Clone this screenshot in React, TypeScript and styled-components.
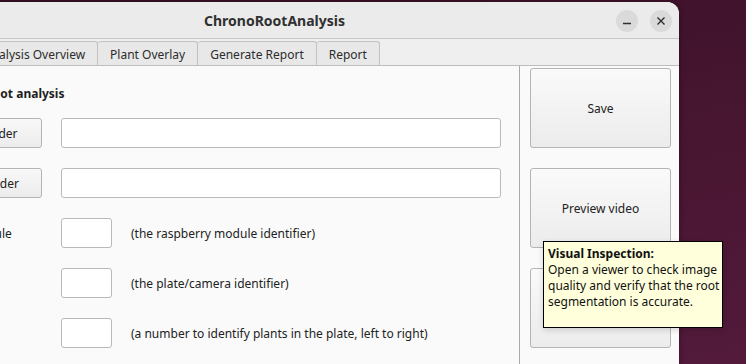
import React from "react";
import styled, { createGlobalStyle } from "styled-components";

const Global = createGlobalStyle`
  html, body { margin: 0; padding: 0; }
  body { width: 746px; height: 364px; overflow: hidden; font-family: "Noto Sans", "DejaVu Sans", sans-serif; }
`;

const Desktop = styled.div`
  position: relative;
  width: 746px;
  height: 364px;
  overflow: hidden;
  padding-top: 2px;
  box-sizing: border-box;
  background: linear-gradient(170deg, #3a1028 0%, #46152f 45%, #531a3b 100%);
`;

const Window = styled.div`
  margin-left: -130px;
  width: 809px;
  height: 380px;
  border-radius: 12px 12px 0 0;
  overflow: hidden;
  background: #fafafa;
  display: flex;
  flex-direction: column;
  box-shadow: 0 0 6px rgba(0, 0, 0, 0.35);
`;

const TitleBar = styled.div`
  height: 36px;
  flex: none;
  background: #ebebeb;
  border-bottom: 1px solid #c6c6c6;
  display: grid;
  grid-template-columns: 1fr auto 1fr;
  align-items: center;
`;

const Title = styled.div`
  grid-column: 2;
  font-weight: 700;
  font-size: 14px;
  color: #303030;
  padding-top: 1px;
`;

const Controls = styled.div`
  grid-column: 3;
  justify-self: end;
  display: flex;
  gap: 12px;
  padding-right: 7px;
  padding-top: 1px;
`;

const CircleButton = styled.div`
  width: 22px;
  height: 22px;
  border-radius: 50%;
  background: #dadada;
  display: flex;
  align-items: center;
  justify-content: center;
`;

const TabBar = styled.div`
  height: 26px;
  flex: none;
  background: #efefef;
  border-bottom: 1px solid #bdbdbd;
  display: flex;
  align-items: flex-end;
  padding-left: 101px;
`;

const Tab = styled.div<{ $first?: boolean }>`
  height: 24px;
  box-sizing: border-box;
  padding: 1px 12px 0;
  background: #e8e8e8;
  border: 1px solid #c2c2c2;
  border-bottom: none;
  border-left-width: ${(p) => (p.$first ? "1px" : "0")};
  border-radius: 3px 3px 0 0;
  font-size: 12px;
  color: #2c2c2c;
  display: flex;
  align-items: center;
`;

const Body = styled.div`
  flex: 1;
  display: flex;
  min-height: 0;
`;

const LeftPanel = styled.div`
  width: 650px;
  flex: none;
  box-sizing: border-box;
  padding: 19px 18px 0 49px;
  border-right: 1px solid #a9a9a9;
`;

const Heading = styled.div`
  font-weight: 700;
  font-size: 12px;
  line-height: 18px;
  color: #1e1e1e;
  margin-left: 66px;
  margin-bottom: 15px;
`;

const FormGrid = styled.div`
  display: grid;
  grid-template-columns: 123px 51px 1fr;
  column-gap: 19px;
  row-gap: 20px;
  grid-auto-rows: 30px;
  align-items: center;
`;

const PushButton = styled.div`
  height: 30px;
  box-sizing: border-box;
  border: 1px solid #b4b4b4;
  border-radius: 3px;
  background: linear-gradient(#f8f8f8, #ececec);
  font-size: 12px;
  color: #222;
  display: flex;
  align-items: center;
  justify-content: center;
`;

const FieldLabel = styled.div`
  font-size: 12px;
  color: #222;
  margin-left: 50px;
`;

const TextInput = styled.div<{ $wide?: boolean }>`
  grid-column: ${(p) => (p.$wide ? "2 / 4" : "2")};
  height: 30px;
  box-sizing: border-box;
  border: 1px solid #b9b9b9;
  border-radius: 3px;
  background: #ffffff;
`;

const Hint = styled.div`
  font-size: 12px;
  color: #222;
  white-space: nowrap;
`;

const RightPanel = styled.div`
  flex: 1;
  box-sizing: border-box;
  padding: 2px 8px 0 10px;
  display: flex;
  flex-direction: column;
  gap: 20px;
`;

const BigButton = styled.div`
  height: 80px;
  flex: none;
  box-sizing: border-box;
  border: 1px solid #b4b4b4;
  border-radius: 3px;
  background: linear-gradient(#fafafa, #ececec);
  font-size: 12px;
  color: #222;
  display: flex;
  align-items: center;
  justify-content: center;
`;

const Tooltip = styled.div`
  position: absolute;
  left: 543px;
  top: 241px;
  width: 180px;
  height: 87px;
  box-sizing: border-box;
  padding: 4px 3px 4px 4px;
  background: #ffffdc;
  border: 1px solid #000;
  font-size: 12px;
  line-height: 16px;
  color: #111;
  white-space: nowrap;
  box-shadow: 0 2px 6px rgba(0, 0, 0, 0.15);
`;

const TipTitle = styled.div`
  font-weight: 700;
`;

const TipLine = styled.div``;

export default function App() {
  return (
    <>
      <Global />
      <Desktop>
        <Window>
          <TitleBar>
            <Title>ChronoRootAnalysis</Title>
            <Controls>
              <CircleButton>
                <svg width="10" height="10" viewBox="0 0 10 10">
                  <line x1="1" y1="7.5" x2="9" y2="7.5" stroke="#2e2e2e" strokeWidth="1.4" />
                </svg>
              </CircleButton>
              <CircleButton>
                <svg width="10" height="10" viewBox="0 0 10 10">
                  <path d="M1.5 1.5 L8.5 8.5 M8.5 1.5 L1.5 8.5" stroke="#2e2e2e" strokeWidth="1.4" />
                </svg>
              </CircleButton>
            </Controls>
          </TitleBar>
          <TabBar>
            <Tab $first>Analysis Overview</Tab>
            <Tab>Plant Overlay</Tab>
            <Tab>Generate Report</Tab>
            <Tab>Report</Tab>
          </TabBar>
          <Body>
            <LeftPanel>
              <Heading>Root analysis</Heading>
              <FormGrid>
                <PushButton>Videos folder</PushButton>
                <TextInput $wide />
                <PushButton>Output folder</PushButton>
                <TextInput $wide />
                <FieldLabel>Module</FieldLabel>
                <TextInput />
                <Hint>(the raspberry module identifier)</Hint>
                <FieldLabel>Plate</FieldLabel>
                <TextInput />
                <Hint>(the plate/camera identifier)</Hint>
                <FieldLabel>Plant</FieldLabel>
                <TextInput />
                <Hint>(a number to identify plants in the plate, left to right)</Hint>
              </FormGrid>
            </LeftPanel>
            <RightPanel>
              <BigButton>Save</BigButton>
              <BigButton>Preview video</BigButton>
              <BigButton />
            </RightPanel>
          </Body>
        </Window>
        <Tooltip>
          <TipTitle>Visual Inspection:</TipTitle>
          <TipLine>Open a viewer to check image</TipLine>
          <TipLine>quality and verify that the root</TipLine>
          <TipLine>segmentation is accurate.</TipLine>
        </Tooltip>
      </Desktop>
    </>
  );
}
